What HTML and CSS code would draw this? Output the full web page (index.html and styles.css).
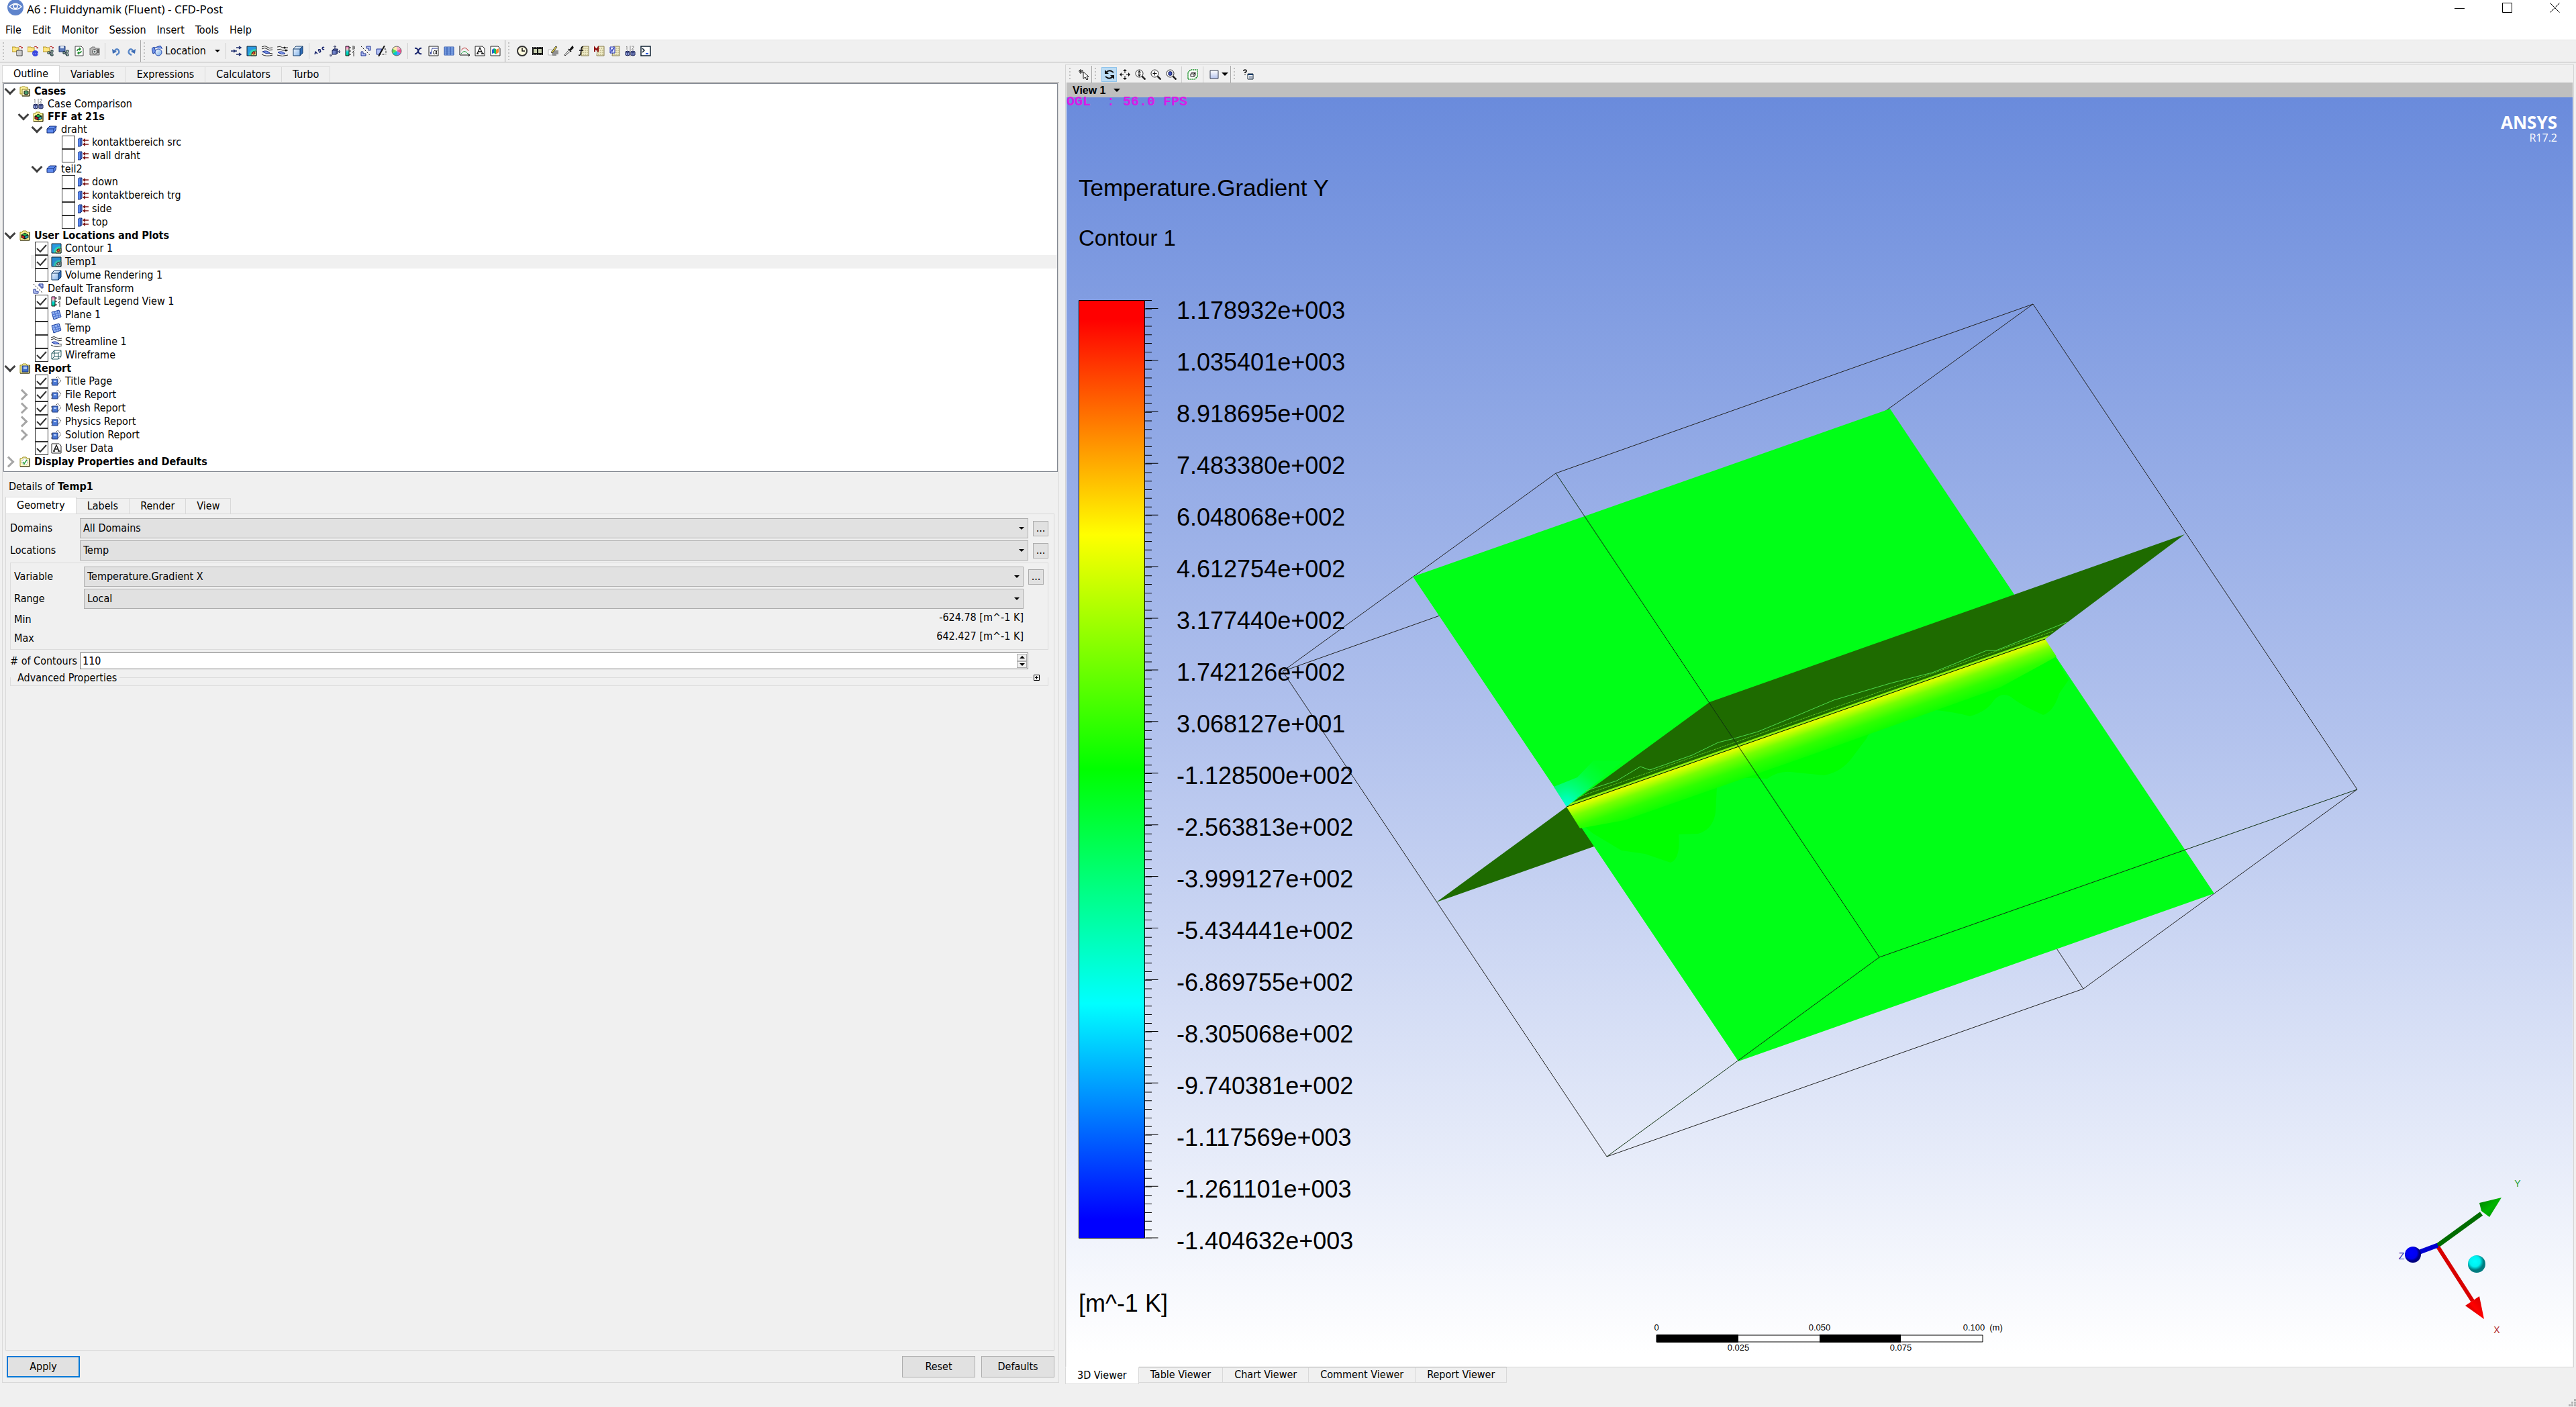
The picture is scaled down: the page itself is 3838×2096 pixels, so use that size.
FILE: index.html
```html
<!DOCTYPE html>
<html lang="en">
<head>
<meta charset="utf-8">
<title>A6 : Fluiddynamik (Fluent) - CFD-Post</title>
<link rel="stylesheet" href="styles.css">
</head>
<body>
<svg class="defs" aria-hidden="true">
  <defs>
    <linearGradient id="glass" x1="0" y1="0" x2="1" y2="1"><stop offset="0" stop-color="#fff"/><stop offset="1" stop-color="#6fa8e8"/></linearGradient>
    <linearGradient id="pale" x1="0" y1="0" x2="0" y2="1"><stop offset="0" stop-color="#fff"/><stop offset="1" stop-color="#b4c2ec"/></linearGradient>
    <linearGradient id="rainbow" x1="0" y1="0" x2="0" y2="1"><stop offset="0" stop-color="#f6c"/><stop offset=".3" stop-color="#fcc"/><stop offset=".6" stop-color="#0dd"/><stop offset="1" stop-color="#0c8"/></linearGradient>
  </defs>
  <symbol id="i-open" viewBox="0 0 16 16"><path d="M0 9V2h5l1 1h4v6z" fill="#ffe680" stroke="#b09020"/><path d="M10 2q4-2 5 2M13 3l2 1 1-2" fill="none" stroke="#b01818"/><path d="M7 7h8v8H7z" fill="#fff" stroke="#222"/><path d="M9 9h5M9 11h5M9 13h5" stroke="#999"/></symbol>
  <symbol id="i-openres" viewBox="0 0 16 16"><path d="M0 9V2h5l1 1h4v6z" fill="#ffe680" stroke="#b09020"/><path d="M10 2q4-2 5 2M13 3l2 1 1-2" fill="none" stroke="#b01818"/><circle cx="11.500" cy="11.500" r="4.500" fill="#3a48e0"/><path d="M9 12h6" stroke="#fff" stroke-dasharray="1 1.500"/></symbol>
  <symbol id="i-openst" viewBox="0 0 16 16"><path d="M0 9V2h5l1 1h4v6z" fill="#ffe680" stroke="#b09020"/><path d="M10 2q4-2 5 2M13 3l2 1 1-2" fill="none" stroke="#b01818"/><path d="M7 9h3v3H7zM12 7h3v3h-3zM12 12h3v3h-3zM10 10h2M11 10v4h1" fill="#bde0bd" stroke="#123"/></symbol>
  <symbol id="i-save" viewBox="0 0 16 16"><path d="M1 1h9v8H1z" fill="#5a78b8" stroke="#203a70"/><path d="M3 1h5v3H3z" fill="#dfe8f8"/><path d="M7 9h3v3H7zM12 7h3v3h-3zM12 12h3v3h-3zM10 10h2M11 10v4h1" fill="#bde0bd" stroke="#123"/></symbol>
  <symbol id="i-refresh" viewBox="0 0 16 16"><path d="M2 1h9l3 3v11H2z" fill="#fff" stroke="#444"/><path d="M5 8q0-3 4-3M8 3l2 2-2 2M11 8q0 3-4 3M8 9l-2 2 2 2" fill="none" stroke="#1c8a2c" stroke-width="1.500"/></symbol>
  <symbol id="i-camera" viewBox="0 0 16 16"><path d="M1 4h2l1-2h4l1 2h6v10H1z" fill="#b8b8b8" stroke="#777"/><circle cx="8" cy="9" r="3.500" fill="#eee" stroke="#444"/><circle cx="8" cy="9" r="1.500" fill="#566"/><path d="M12 5h3v6h-3z" fill="#666"/></symbol>
  <symbol id="i-undo" viewBox="0 0 16 16"><path d="M8 14q7-3 3-8-3-2-5 2" fill="none" stroke="#5a88c8" stroke-width="2.500"/><path d="M2 5l1 7 6-3z" fill="#3d6cb4"/></symbol>
  <symbol id="i-redo" viewBox="0 0 16 16"><path d="M8 14q-7-3-3-8 3-2 5 2" fill="none" stroke="#5a88c8" stroke-width="2.500"/><path d="M14 5l-1 7-6-3z" fill="#3d6cb4"/></symbol>
  <symbol id="i-plane" viewBox="0 0 16 16"><path d="M1 4l11-3 3 10-11 4z" fill="#8fb0f0" stroke="#1c3f9c"/><path d="M2 8l11-3M3 11l11-3M5 3l3 10M9 2l3 10" stroke="#4a70d0"/></symbol>
  <symbol id="i-location" viewBox="0 0 16 16"><path d="M0 4l4-2 2 8-4 2zM5 3l8-3 3 5" fill="#6f92e8" stroke="#1c3f9c"/><circle cx="10" cy="10" r="5" fill="url(#glass)" stroke="#2448b0"/></symbol>
  <symbol id="i-vector" viewBox="0 0 16 16"><path d="M8 3h6M12 1l3 2-3 2M0 8h6M4 6l3 2-3 2M8 8h1M8 13h6M12 11l3 2-3 2" fill="none" stroke="#1c2c6c" stroke-width="1.500"/></symbol>
  <symbol id="i-contour" viewBox="0 0 16 16"><path d="M1 1h14v14H1z" fill="#2a9ae0"/><path d="M4 15q0-10 11-10v10z" fill="#30d8b0"/><path d="M7 15q0-7 8-7v7z" fill="#f4e880" stroke="#464"/><circle cx="11" cy="11" r="2" fill="#f05030" stroke="#411"/><path d="M1 1h14v14H1z" fill="none" stroke="#123"/></symbol>
  <symbol id="i-contourgrey" viewBox="0 0 16 16"><path d="M1 1h14v14H1z" fill="#2a8ad0"/><path d="M4 15q0-10 11-10v10z" fill="#30c0b0"/><path d="M7 15q0-7 8-7v7z" fill="#b0c8c8" stroke="#465"/><circle cx="11" cy="11" r="2" fill="#a8a8a8" stroke="#333"/><path d="M1 1h14v14H1z" fill="none" stroke="#123"/></symbol>
  <symbol id="i-stream" viewBox="0 0 16 16"><path d="M0 2q5-3 8 0t8 1M0 5q5-3 8 0t8 1M0 13q7 4 16 1M10 11l6 1" fill="none" stroke="#222"/><path d="M1 9q6-3 11 2-6 2-11-2z" fill="#7f9cf0" stroke="#1c3090"/></symbol>
  <symbol id="i-particle" viewBox="0 0 16 16"><path d="M0 2q5-2 8 1h8M0 6q5-2 8 1h8M0 14q7 3 16 0" fill="none" stroke="#222"/><circle cx="11" cy="3" r="1.500"/><circle cx="13" cy="7" r="1.500"/><path d="M1 10q6-3 11 2-6 2-11-2z" fill="#7f9cf0" stroke="#1c3090"/></symbol>
  <symbol id="i-volume" viewBox="0 0 16 16"><path d="M1 5l4-4h10v10l-4 4H1z" fill="url(#glass)"/><path d="M11 5l4-4v10l-4 4z" fill="#2f6cb8"/><path d="M1 5l4-4h10v10l-4 4H1zM1 5h10v10M11 5l4-4" fill="none" stroke="#123a68"/></symbol>
  <symbol id="i-text" viewBox="0 0 16 16"><g fill="none" stroke="#18246c" stroke-width="1.400"><path d="M1 13l1-4 3 3M2 11l2-1M6 6l2 4q3-1 1-3 1-2-3-1M15 3q-2-2-3 1 1 3 3 1"/></g></symbol>
  <symbol id="i-coord" viewBox="0 0 16 16"><path d="M4 7l2-2h6v6l-2 2H4z" fill="#6f82c8" stroke="#141c50"/><path d="M4 7h6v6M10 7l2-2M8 5V0M6 2l2-2 2 2M12 9h4M14 7l2 2-2 2M4 13l-3 3M1 13v3h3" fill="none" stroke="#141c50"/></symbol>
  <symbol id="i-legend" viewBox="0 0 16 16"><path d="M1 1h5v14H1z" fill="url(#rainbow)" stroke="#111"/><path d="M6 3h3M6 8h3M6 13h3" stroke="#111"/><path d="M11 1h3v4h-3M11 3h3M14 7l-3 3h3M13 11v5" fill="none" stroke="#333"/></symbol>
  <symbol id="i-transform" viewBox="0 0 16 16"><path d="M9 1h6v6h-3V4H9zM1 9h3v3h4v3H1z" fill="#b4c2f4" stroke="#1c3090"/><path d="M1 1l14 14" stroke="#111" stroke-dasharray="2 2"/></symbol>
  <symbol id="i-clip" viewBox="0 0 16 16"><path d="M1 5h8l-4 8H1z" fill="#b4c2f4" stroke="#1c3090"/><path d="M13 0L4 16" stroke="#111" stroke-width="2"/><path d="M10 5h5v8H7" fill="none" stroke="#111" stroke-dasharray="1 1"/></symbol>
  <symbol id="i-color" viewBox="0 0 16 16"><path d="M8 8V1a7 7 0 016 3.500z" fill="#f4b0c8"/><path d="M8 8l6-3.500a7 7 0 010 7z" fill="#f05090"/><path d="M8 8l6 3.500A7 7 0 018 15z" fill="#68f"/><path d="M8 8v7a7 7 0 01-6-3.500z" fill="#0cc"/><path d="M8 8l-6 3.500a7 7 0 010-7z" fill="#5d5"/><path d="M8 8L2 4.500A7 7 0 018 1z" fill="#fea"/><circle cx="8" cy="8" r="7" fill="none" stroke="#666"/></symbol>
  <symbol id="i-var" viewBox="0 0 16 16"><path d="M3 4q4-1 5 4t5 4M13 4q-3-1-5 4t-5 4" fill="none" stroke="#18246c" stroke-width="2"/></symbol>
  <symbol id="i-expr" viewBox="0 0 16 16"><path d="M1 1h14v14H1z" fill="#fff" stroke="#222"/><path d="M3 9l1 4 2-9h8" fill="none" stroke="#1c3090"/><path d="M13 7q-2 7-5 5-1-4 2-5 2 1 3 6" fill="none" stroke="#111"/></symbol>
  <symbol id="i-table" viewBox="0 0 16 16"><path d="M1 2h14v12H1z" fill="#9cc0f8" stroke="#2850a8"/><path d="M1 5h14M1 8h14M1 11h14M5 2v12M10 2v12" stroke="#2850a8"/></symbol>
  <symbol id="i-chart" viewBox="0 0 16 16"><path d="M1 0v14h15M13 12l3 2-3 2" fill="none" stroke="#111"/><path d="M3 7q6-8 11 1" fill="none" stroke="#c03030"/><path d="M3 12q5-7 10 0" fill="none" stroke="#20a040"/></symbol>
  <symbol id="i-comment" viewBox="0 0 16 16"><path d="M1 1h11l3 3v11H1z" fill="#fff" stroke="#222"/><path d="M4 12l4-9 4 9M5 9h6M3 12h3M10 12h4" fill="none" stroke="#111" stroke-width="1.300"/></symbol>
  <symbol id="i-figure" viewBox="0 0 16 16"><path d="M1 1h11l3 3v11H1z" fill="#fff" stroke="#222"/><path d="M3 6l3-2v7l-3 1z" fill="#26c"/><path d="M6 4l3 1v8l-3-2z" fill="#1b6"/><path d="M9 6l4-2v6l-4 3z" fill="#e83"/></symbol>
  <symbol id="i-clock" viewBox="0 0 16 16"><circle cx="8" cy="8" r="7" fill="#fffbe0" stroke="#333" stroke-width="2"/><path d="M8 3v5h4" fill="none" stroke="#111" stroke-width="1.500"/></symbol>
  <symbol id="i-film" viewBox="0 0 16 16"><path d="M0 2h16v12H0z" fill="#111"/><path d="M2 5h5v6H2zM9 5h5v6H9z" fill="#c8d0b0"/><path d="M1 3h14M1 13h14" stroke="#fff" stroke-dasharray="1 1.500"/></symbol>
  <symbol id="i-edit" viewBox="0 0 16 16"><path d="M1 6h6v8H1z" fill="#fff" stroke="#bbb"/><path d="M8 8h8M7 10h9M7 12h9M7 14h6" stroke="#333"/><path d="M5 10l7-9 2 1-7 9z" fill="#f0d840" stroke="#444"/></symbol>
  <symbol id="i-probe" viewBox="0 0 16 16"><path d="M2 14l7-8 2 2-8 7z" fill="#fff" stroke="#333"/><path d="M8 5l4 4M10 6l4-5 1 2-4 4z" fill="#111" stroke="#111" stroke-width="1.500"/></symbol>
  <symbol id="calc" viewBox="0 0 16 16"><path d="M6 1h9v14H4z" fill="#f0ecc8" stroke="#857a4a"/><path d="M7 4h7M6 7h8M6 10h8M6 13h8" stroke="#a8a070" stroke-dasharray="2 1"/></symbol>
  <symbol id="i-fcalc" viewBox="0 0 16 16"><use href="#calc"/><path d="M7 2q-3-1-3 4l-1 7q-1 2-3 1M1 7h6" fill="none" stroke="#111" stroke-width="1.500"/></symbol>
  <symbol id="i-mcalc" viewBox="0 0 16 16"><use href="#calc"/><path d="M1 9V3l2.500 3L6 3v6" fill="none" stroke="#901010" stroke-width="2"/></symbol>
  <symbol id="i-vcalc" viewBox="0 0 16 16"><use href="#calc"/><path d="M1 2h7v9H1z" fill="#dfe4ff" stroke="#2030b0"/><path d="M1 4l3 4 3-4M4 8v2M1 10l6-7" fill="none" stroke="#2030b0"/></symbol>
  <symbol id="i-compare" viewBox="0 0 16 16"><path d="M2 2l1-1v5M10 1h3v2l-3 3h3" fill="none" stroke="#888"/><path d="M8 0v16" stroke="#888"/><path d="M1 9l3-1 3 1v5l-3 1-3-1zM9 9l3-1 3 1v5l-3 1-3-1z" fill="#8f9fdc" stroke="#141c50"/><path d="M2 10h4M4 10v4M10 10h4M12 10v4" stroke="#141c50"/></symbol>
  <symbol id="i-console" viewBox="0 0 16 16"><path d="M1 1h14v14H1z" fill="#fff" stroke="#123" stroke-width="1.500"/><path d="M3 4l3 3-3 3" fill="none" stroke="#123" stroke-width="1.500"/><path d="M8 12h4" stroke="#25d" stroke-width="2"/></symbol>
  <symbol id="i-cases" viewBox="0 0 16 16"><path d="M1 12V2h2l1-1h4l1 1h3v10z" fill="#fff3a0" stroke="#a09018"/><path d="M4 15V5h11v10z" fill="#fff9c0" stroke="#8a8020"/><path d="M15 5v10H4" fill="none" stroke="#222"/><path d="M7 8l3-1 3 1v4l-3 1-3-1z" fill="#4a9a6a" stroke="#111"/></symbol>
  <symbol id="i-case" viewBox="0 0 16 16"><path d="M1 15V3h3l1-2h5l1 2h4v12z" fill="#fff59a" stroke="#9a8c18"/><path d="M15 3v12H1" fill="none" stroke="#222"/><path d="M3 7l5-3 5 3-5 2z" fill="#2cb84a" stroke="#111"/><path d="M3 7l5 2v4l-5-2z" fill="#c82020" stroke="#111"/><path d="M13 7L8 9v4l5-2z" fill="#28b0b8" stroke="#111"/></symbol>
  <symbol id="i-report" viewBox="0 0 16 16"><path d="M1 15V3h3l1-2h5l1 2h4v12z" fill="#fff59a" stroke="#9a8c18"/><path d="M15 3v12H1" fill="none" stroke="#222"/><path d="M4 4h9v9H4z" fill="#3f6fc8" stroke="#1c3880"/><path d="M6 5h5v4H6z" fill="#a8c4f4"/></symbol>
  <symbol id="i-display" viewBox="0 0 16 16"><path d="M1 15V3h3l1-2h5l1 2h4v12z" fill="#fffbc8" stroke="#9a8c18"/><path d="M15 3v12H1" fill="none" stroke="#222"/><circle cx="8" cy="8" r="4.500" fill="#fff" stroke="#899" stroke-dasharray="2 1"/><path d="M5 8l2 3 4-6" fill="none" stroke="#28a038" stroke-width="1.500"/></symbol>
  <symbol id="i-domain" viewBox="0 0 16 16"><path d="M1 7l4-4h10l-1 6-3 4H1z" fill="#5f8cf0" stroke="#122c78"/><path d="M1 7h10v6M11 7l4-4" fill="none" stroke="#122c78"/></symbol>
  <symbol id="i-boundary" viewBox="0 0 16 16"><path d="M0 4l2-2h4v10l-2 2H0z" fill="#5f8cf0" stroke="#122c78"/><path d="M4 4v10M4 4l2-2" stroke="#122c78"/><path d="M9 5h7M9 11h7" stroke="#7c1414" stroke-width="1.500"/><path d="M7 5l4-3v6zM7 11l4-3v6z" fill="#7c1414"/></symbol>
  <symbol id="i-wire" viewBox="0 0 16 16"><path d="M1 5l4-4h10v9l-4 4H1zM1 5h10v9M11 5l4-4M5 1v9h10M5 10l-4 4" fill="none" stroke="#245a60"/></symbol>
  <symbol id="i-page" viewBox="0 0 16 16"><path d="M8 3l2-2 5 6-5 6-2-2" fill="#fff" stroke="#444" stroke-dasharray="2 1"/><path d="M2 5h8v9H2z" fill="#4a78d4" stroke="#1c3880"/><path d="M4 7h4v2H4z" fill="#bcd0f8"/><path d="M1 5v9" stroke="#333" stroke-dasharray="1 1"/></symbol>
  <symbol id="i-pick" viewBox="0 0 16 16"><path d="M3 0v7M0 3h7M1 1l5 5M6 1L1 6" stroke="#111"/><path d="M7 4v10l3-2 2 4 2-1-2-4h3z" fill="#fff" stroke="#111"/></symbol>
  <symbol id="i-rotate" viewBox="0 0 16 16"><path d="M3 5q4-4 8-2l3 2M13 11q-4 4-8 2l-3-2" fill="none" stroke="#111" stroke-width="2"/><path d="M1 1v6h6zM15 15V9H9z" fill="#111"/></symbol>
  <symbol id="i-pan" viewBox="0 0 16 16"><path d="M8 0l3 3H5zM8 16l3-3H5zM0 8l3-3v6zM16 8l-3-3v6z" fill="#111"/><path d="M8 2v4M8 10v4M2 8h4M10 8h4" stroke="#111"/></symbol>
  <symbol id="mag" viewBox="0 0 16 16"><circle cx="6.500" cy="6.500" r="5.500" fill="#fff" stroke="#222"/><path d="M10.500 10.500l5 5" stroke="#222" stroke-width="2.500"/></symbol>
  <symbol id="i-zoom" viewBox="0 0 16 16"><use href="#mag"/><path d="M6.500 2l2 3h-4zM6.500 11l2-3h-4zM5 6.500h3" fill="#111" stroke="#111" stroke-width=".5"/></symbol>
  <symbol id="i-zoombox" viewBox="0 0 16 16"><use href="#mag"/><path d="M6.500 3.500v6M3.500 6.500h6" stroke="#111"/></symbol>
  <symbol id="i-fit" viewBox="0 0 16 16"><use href="#mag"/><path d="M4 4.500l2.500-1 2.500 1v4l-2.500 1-2.500-1z" fill="#3c50b8" stroke="#141c50"/></symbol>
  <symbol id="i-hilite" viewBox="0 0 16 16"><path d="M1 5l4-4h10v10l-4 4H1z" fill="#fff" stroke="#0a8a1a" stroke-width="1.500" stroke-dasharray="2 1"/><path d="M5 7l2-2h5v4l-2 2H5zM5 7h5v4M10 7l2-2" fill="none" stroke="#111"/></symbol>
  <symbol id="i-layout" viewBox="0 0 16 16"><path d="M2 2h12v12H2z" fill="url(#pale)" stroke="#333a50"/></symbol>
  <symbol id="i-helpwin" viewBox="0 0 16 16"><path d="M1 3q0-2 2-2t2 2q0 1-2 2v1M3 8v1" fill="none" stroke="#111" stroke-width="1.700"/><path d="M7 7h8v8H7z" fill="#fff" stroke="#123"/><path d="M7 7h8v2H7z" fill="#123a68"/><path d="M9 11h5M9 13h5" stroke="#568"/></symbol>
</svg>

<header>
  <div class="titlebar">
    <svg class="appicon" viewBox="0 0 24 24"><circle cx="12" cy="12" r="12" fill="#5f84cc"/><path d="M3 11q9-9 18 0-9 8-18 0z" fill="none" stroke="#fff" stroke-width="1.500"/><circle cx="12" cy="10.500" r="3" fill="none" stroke="#fff" stroke-width="1.500"/></svg>
    <h1>A6 : Fluiddynamik (Fluent) - CFD-Post</h1>
    <div class="winbuttons">
      <button aria-label="Minimize"><svg viewBox="0 0 16 16"><path d="M0 8.500h15" stroke="#000"/></svg></button>
      <button aria-label="Maximize"><svg viewBox="0 0 16 16"><path d="M.5 .5h14v14H.5z" fill="none" stroke="#000"/></svg></button>
      <button aria-label="Close"><svg viewBox="0 0 16 16"><path d="M.5 .5l14 14M14.500 .5l-14 14" stroke="#000"/></svg></button>
    </div>
  </div>
  <nav class="menubar">
    <button>File</button><button>Edit</button><button>Monitor</button><button>Session</button><button>Insert</button><button>Tools</button><button>Help</button>
  </nav>
  <div class="toolbar">
    <div class="group">
      <span class="grip"></span>
      <button aria-label="Load results"><svg><use href="#i-open"/></svg></button><button aria-label="Load recent"><svg><use href="#i-openres"/></svg></button><button aria-label="Load state"><svg><use href="#i-openst"/></svg></button><button aria-label="Save state"><svg><use href="#i-save"/></svg></button><button aria-label="Refresh"><svg><use href="#i-refresh"/></svg></button><button aria-label="Save picture"><svg><use href="#i-camera"/></svg></button>
      <span class="sep"></span>
      <button aria-label="Undo"><svg><use href="#i-undo"/></svg></button><button aria-label="Redo"><svg><use href="#i-redo"/></svg></button>
    </div>
    <div class="group">
      <span class="grip"></span>
      <button class="location"><svg><use href="#i-location"/></svg>Location<i class="tri"></i></button>
      <span class="sep"></span>
      <button aria-label="Vector"><svg><use href="#i-vector"/></svg></button><button aria-label="Contour"><svg><use href="#i-contour"/></svg></button><button aria-label="Streamline"><svg><use href="#i-stream"/></svg></button><button aria-label="Particle track"><svg><use href="#i-particle"/></svg></button><button aria-label="Volume rendering"><svg><use href="#i-volume"/></svg></button>
      <span class="sep"></span>
      <button aria-label="Text"><svg><use href="#i-text"/></svg></button><button aria-label="Coordinate frame"><svg><use href="#i-coord"/></svg></button><button aria-label="Legend"><svg><use href="#i-legend"/></svg></button><button aria-label="Instance transform"><svg><use href="#i-transform"/></svg></button><button aria-label="Clip plane"><svg><use href="#i-clip"/></svg></button><button aria-label="Color map"><svg><use href="#i-color"/></svg></button>
      <span class="sep"></span>
      <button aria-label="Variable"><svg><use href="#i-var"/></svg></button><button aria-label="Expression"><svg><use href="#i-expr"/></svg></button><button aria-label="Table"><svg><use href="#i-table"/></svg></button><button aria-label="Chart"><svg><use href="#i-chart"/></svg></button><button aria-label="Comment"><svg><use href="#i-comment"/></svg></button><button aria-label="Figure"><svg><use href="#i-figure"/></svg></button>
    </div>
    <div class="group">
      <span class="grip"></span>
      <button aria-label="Timesteps"><svg><use href="#i-clock"/></svg></button><button aria-label="Animation"><svg><use href="#i-film"/></svg></button><button aria-label="Quick editor"><svg><use href="#i-edit"/></svg></button><button aria-label="Probe"><svg><use href="#i-probe"/></svg></button><button aria-label="Function calculator"><svg><use href="#i-fcalc"/></svg></button><button aria-label="Macro calculator"><svg><use href="#i-mcalc"/></svg></button><button aria-label="Mesh calculator"><svg><use href="#i-vcalc"/></svg></button><button aria-label="Case comparison"><svg><use href="#i-compare"/></svg></button><button aria-label="Command editor"><svg><use href="#i-console"/></svg></button>
    </div>
  </div>
</header>

<main>
  <section class="side">
    <div class="tabs">
      <button class="tab active">Outline</button><button class="tab">Variables</button><button class="tab">Expressions</button><button class="tab">Calculators</button><button class="tab">Turbo</button>
    </div>
    <div class="sidebody">
      <div class="tree">
        <div class="row head"><span class="slot open"></span><div class="item"><svg><use href="#i-cases"/></svg>Cases</div></div>
        <div class="row l1"><span class="slot"></span><div class="item"><svg><use href="#i-compare"/></svg>Case Comparison</div></div>
        <div class="row head l1"><span class="slot open"></span><div class="item"><svg><use href="#i-case"/></svg>FFF at 21s</div></div>
        <div class="row l2"><span class="slot open"></span><div class="item"><svg><use href="#i-domain"/></svg>draht</div></div>
        <div class="row check l3"><span class="slot"></span><label class="item"><input type="checkbox"><svg><use href="#i-boundary"/></svg>kontaktbereich src</label></div>
        <div class="row check l3"><span class="slot"></span><label class="item"><input type="checkbox"><svg><use href="#i-boundary"/></svg>wall draht</label></div>
        <div class="row l2"><span class="slot open"></span><div class="item"><svg><use href="#i-domain"/></svg>teil2</div></div>
        <div class="row check l3"><span class="slot"></span><label class="item"><input type="checkbox"><svg><use href="#i-boundary"/></svg>down</label></div>
        <div class="row check l3"><span class="slot"></span><label class="item"><input type="checkbox"><svg><use href="#i-boundary"/></svg>kontaktbereich trg</label></div>
        <div class="row check l3"><span class="slot"></span><label class="item"><input type="checkbox"><svg><use href="#i-boundary"/></svg>side</label></div>
        <div class="row check l3"><span class="slot"></span><label class="item"><input type="checkbox"><svg><use href="#i-boundary"/></svg>top</label></div>
        <div class="row head"><span class="slot open"></span><div class="item"><svg><use href="#i-case"/></svg>User Locations and Plots</div></div>
        <div class="row check l1"><span class="slot"></span><label class="item"><input type="checkbox" checked><svg><use href="#i-contour"/></svg>Contour 1</label></div>
        <div class="row check l1 selected"><span class="slot"></span><label class="item"><input type="checkbox" checked><svg><use href="#i-contourgrey"/></svg>Temp1</label></div>
        <div class="row check l1"><span class="slot"></span><label class="item"><input type="checkbox"><svg><use href="#i-volume"/></svg>Volume Rendering 1</label></div>
        <div class="row l1"><span class="slot"></span><div class="item"><svg><use href="#i-transform"/></svg>Default Transform</div></div>
        <div class="row check l1"><span class="slot"></span><label class="item"><input type="checkbox" checked><svg><use href="#i-legend"/></svg>Default Legend View 1</label></div>
        <div class="row check l1"><span class="slot"></span><label class="item"><input type="checkbox"><svg><use href="#i-plane"/></svg>Plane 1</label></div>
        <div class="row check l1"><span class="slot"></span><label class="item"><input type="checkbox"><svg><use href="#i-plane"/></svg>Temp</label></div>
        <div class="row check l1"><span class="slot"></span><label class="item"><input type="checkbox"><svg><use href="#i-stream"/></svg>Streamline 1</label></div>
        <div class="row check l1"><span class="slot"></span><label class="item"><input type="checkbox" checked><svg><use href="#i-wire"/></svg>Wireframe</label></div>
        <div class="row head"><span class="slot open"></span><div class="item"><svg><use href="#i-report"/></svg>Report</div></div>
        <div class="row check l1"><span class="slot"></span><label class="item"><input type="checkbox" checked><svg><use href="#i-page"/></svg>Title Page</label></div>
        <div class="row check l1"><span class="slot closed"></span><label class="item"><input type="checkbox" checked><svg><use href="#i-page"/></svg>File Report</label></div>
        <div class="row check l1"><span class="slot closed"></span><label class="item"><input type="checkbox" checked><svg><use href="#i-page"/></svg>Mesh Report</label></div>
        <div class="row check l1"><span class="slot closed"></span><label class="item"><input type="checkbox" checked><svg><use href="#i-page"/></svg>Physics Report</label></div>
        <div class="row check l1"><span class="slot closed"></span><label class="item"><input type="checkbox"><svg><use href="#i-page"/></svg>Solution Report</label></div>
        <div class="row check l1"><span class="slot"></span><label class="item"><input type="checkbox" checked><svg><use href="#i-comment"/></svg>User Data</label></div>
        <div class="row head"><span class="slot closed"></span><div class="item"><svg><use href="#i-display"/></svg>Display Properties and Defaults</div></div>
      </div>

      <div class="details">
        <p class="caption">Details of <b>Temp1</b></p>
        <div class="tabs small">
          <button class="tab active">Geometry</button><button class="tab">Labels</button><button class="tab">Render</button><button class="tab">View</button>
        </div>
        <div class="form">
          <div class="field"><label for="domains">Domains</label><span class="combo"><select id="domains"><option>All Domains</option></select></span><button class="more">...</button></div>
          <div class="field"><label for="locations">Locations</label><span class="combo"><select id="locations"><option>Temp</option></select></span><button class="more">...</button></div>
          <div class="box">
            <div class="field"><label for="variable">Variable</label><span class="combo"><select id="variable"><option>Temperature.Gradient X</option></select></span><button class="more">...</button></div>
            <div class="field"><label for="range">Range</label><span class="combo"><select id="range"><option>Local</option></select></span><span class="nomore"></span></div>
            <div class="value"><span>Min</span><output>-624.78 [m^-1 K]</output></div>
            <div class="value"><span>Max</span><output>642.427 [m^-1 K]</output></div>
          </div>
          <div class="field contours"><label for="contours"># of Contours</label><span class="spin"><input id="contours" type="text" value="110"><span class="arrows"><button aria-label="Increase"><i class="tri up"></i></button><button aria-label="Decrease"><i class="tri"></i></button></span></span><span class="nomore"></span></div>
          <div class="advanced"><span>Advanced Properties</span><i></i><button aria-label="Expand"><svg viewBox="0 0 9 9"><path d="M.5 .5h8v8h-8zM2 4.500h5M4.500 2v5" fill="none" stroke="#000"/></svg></button></div>
        </div>
        <div class="actions"><button class="default">Apply</button><span></span><button>Reset</button><button>Defaults</button></div>
      </div>
    </div>
  </section>

  <section class="viewer">
    <div class="frame">
      <div class="toolbar slim">
        <div class="group"><span class="grip"></span><button aria-label="Pick"><svg><use href="#i-pick"/></svg></button></div>
        <div class="group"><span class="grip"></span><button class="on" aria-label="Rotate"><svg><use href="#i-rotate"/></svg></button><button aria-label="Pan"><svg><use href="#i-pan"/></svg></button><button aria-label="Zoom"><svg><use href="#i-zoom"/></svg></button><button aria-label="Zoom box"><svg><use href="#i-zoombox"/></svg></button><button aria-label="Fit view"><svg><use href="#i-fit"/></svg></button><span class="sep"></span><button aria-label="Highlighting"><svg><use href="#i-hilite"/></svg></button><span class="sep"></span><button class="layout" aria-label="Viewport layout"><svg><use href="#i-layout"/></svg><i class="tri"></i></button></div>
        <div class="group"><span class="grip"></span><button aria-label="Viewer help"><svg><use href="#i-helpwin"/></svg></button></div>
      </div>
      <button class="viewbar">View 1<i class="tri"></i></button>
      <div class="canvas">
        <svg class="scene" viewBox="1589 145 2244 1890" preserveAspectRatio="xMinYMin meet">
          <defs>
            <linearGradient id="heat" gradientUnits="userSpaceOnUse" x1="2334" y1="1202" x2="2352" y2="1253"><stop offset="0" stop-color="#f4ff00"/><stop offset=".12" stop-color="#c4ff00"/><stop offset=".3" stop-color="#78ff00"/><stop offset=".6" stop-color="#30ff00"/><stop offset="1" stop-color="#0f0"/></linearGradient>
            <radialGradient id="cold" gradientUnits="userSpaceOnUse" cx="2334" cy="1200" r="76"><stop offset="0" stop-color="#00ffd8"/><stop offset=".35" stop-color="#00ff80"/><stop offset=".7" stop-color="#00ff3c"/><stop offset="1" stop-color="#00ff20"/></radialGradient>
            <radialGradient id="ballb" cx=".4" cy=".4"><stop offset="0" stop-color="#00f"/><stop offset=".7" stop-color="#0000f0"/><stop offset="1" stop-color="#000080"/></radialGradient>
            <radialGradient id="ballc" cx=".4" cy=".35"><stop offset="0" stop-color="#0ff"/><stop offset=".6" stop-color="#00f0f0"/><stop offset="1" stop-color="#007c80"/></radialGradient>
            <linearGradient id="headg" x1="0" y1="0" x2="1" y2="1"><stop offset="0" stop-color="#007a00"/><stop offset=".5" stop-color="#00b400"/><stop offset="1" stop-color="#009000"/></linearGradient>
            <linearGradient id="headr" x1="0" y1="1" x2="1" y2="0"><stop offset="0" stop-color="#800"/><stop offset=".5" stop-color="#f00"/><stop offset="1" stop-color="#c00"/></linearGradient>
          </defs>
          <g fill="none" stroke="#222" stroke-width="1">
            <path d="M1911 1000L2622 748L3104 1473M2622 748L3029 453"/>
            <path d="M2318 705L1911 1000L2394 1723L3104 1473L3512 1176L3029 453L2318 705"/>
          </g>
          <path d="M2140 1344L2334 1202L2400 1252L2372 1262z" fill="#1e6b00"/>
          <path d="M2816 609L2105 859L2590 1581L3299 1331z" fill="#00ff17"/>
          <path d="M2334 1202L2315 1172L2350 1158L2374 1133L2419 1133z" fill="url(#cold)"/>
          <path d="M2334 1202L2346 1220L2374 1242L2416 1267L2451 1272L2489 1285Q2504 1280 2501 1243L2530 1242Q2552 1236 2556 1210L2558 1172Q2560 1160 2584 1158L2633 1160Q2650 1148 2668 1150L2718 1155Q2744 1150 2760 1128L2781 1100Q2790 1078 2844 1072L2875 1057Q2910 1060 2935 1067Q2960 1060 2970 1044Q2982 1030 2996 1038Q3010 1050 3044 1065Q3060 1060 3068 1033L3082 1013L3047 952z" fill="#0f0"/>
          <path d="M2334 1202L3047 952L3064 978L2980 1024L2700 1124L2420 1222L2354 1234z" fill="url(#heat)"/>
          <path d="M2334 1202L2547 1046L3255 796L3047 952z" fill="#1e6b00"/>
          <path d="M2363 1178L2409 1163L2444 1142L2458 1147L2521 1125L2560 1106L2584 1100L2619 1090L2675 1067L2732 1043L2816 1018L2879 1002L2914 988L2960 969L2974 969L3079 927" fill="none" stroke="#4fdc4a"/>
          <path d="M2341 1196L3054 946L3047 952L2334 1202z" fill="#8fee10"/>
          <path d="M2350 1188L3060 940" fill="none" stroke="#5cc81e" stroke-dasharray="3 1"/>
          <path d="M2334 1202L3047 952" stroke="#001800" stroke-width="1"/>
          <path d="M2318 705L2800 1426L3512 1176M2800 1426L2394 1723" fill="none" stroke="#103010"/>

          <path d="M3631 1856L3697 1808" stroke="#006c00" stroke-width="7"/>
          <path d="M3727 1784L3694 1792L3697 1804L3709 1813z" fill="url(#headg)"/>
          <path d="M3632 1857L3684 1938" stroke="#d80000" stroke-width="6"/>
          <path d="M3701 1965L3673 1945L3694 1931z" fill="url(#headr)"/>
          <path d="M3632 1855L3600 1867" stroke="#0000d0" stroke-width="7"/>
          <circle cx="3595" cy="1869" r="12" fill="url(#ballb)"/>
          <circle cx="3690" cy="1883" r="13" fill="url(#ballc)"/>
          <g class="axis"><text x="3751" y="1768" fill="#20a030">Y</text><text x="3720" y="1986" fill="#b02020">X</text><text x="3578" y="1876" fill="#2020b0">Z</text></g>

          <path d="M2468 1989h486v10h-486z" fill="#fff" stroke="#000"/>
          <path d="M2468 1988h122v12h-122zM2711 1988h121v12h-121z"/>
          <g class="scale"><text x="2468" y="1982">0</text><text x="2711" y="1982">0.050</text><text x="2941" y="1982">0.100</text><text x="2974" y="1982">(m)</text><text x="2590" y="2012">0.025</text><text x="2832" y="2012">0.075</text></g>
        </svg>
        <div class="overlay">
          <pre class="fps">OGL  : 56.0 FPS</pre>
          <div class="brand"><b>ANSYS</b><span>R17.2</span></div>
        </div>
        <div class="legend">
          <p>Temperature.Gradient Y</p>
          <p class="name">Contour 1</p>
          <div class="scalebar">
            <svg viewBox="0 0 120 1398"><defs><linearGradient id="jet" x1="0" y1="0" x2="0" y2="1"><stop offset="0" stop-color="#f00"/><stop offset=".02" stop-color="#f00"/><stop offset=".25" stop-color="#ff0"/><stop offset=".5" stop-color="#0f0"/><stop offset=".75" stop-color="#0ff"/><stop offset=".98" stop-color="#00f"/><stop offset="1" stop-color="#00f"/></linearGradient></defs>
              <path d="M.5 .5h98v1397h-98z" fill="url(#jet)" stroke="#000"/>
              <path d="M104 0v1398" stroke="#000" stroke-width="10" stroke-dasharray="1 11.820"/>
              <path d="M109 12v1386" stroke="#000" stroke-width="19" stroke-dasharray="1 75.920"/></svg>
            <ol>
              <li>1.178932e+003</li><li>1.035401e+003</li><li>8.918695e+002</li><li>7.483380e+002</li><li>6.048068e+002</li><li>4.612754e+002</li><li>3.177440e+002</li><li>1.742126e+002</li><li>3.068127e+001</li><li>-1.128500e+002</li><li>-2.563813e+002</li><li>-3.999127e+002</li><li>-5.434441e+002</li><li>-6.869755e+002</li><li>-8.305068e+002</li><li>-9.740381e+002</li><li>-1.117569e+003</li><li>-1.261101e+003</li><li>-1.404632e+003</li>
            </ol>
          </div>
          <p class="unit">[m^-1 K]</p>
        </div>
      </div>
    </div>
    <div class="tabs bottom">
      <button class="tab active">3D Viewer</button><button class="tab">Table Viewer</button><button class="tab">Chart Viewer</button><button class="tab">Comment Viewer</button><button class="tab">Report Viewer</button>
    </div>
  </section>
</main>
<footer><svg viewBox="0 0 12 12"><path d="M9 0h3v3H9zM5 4h3v3H5zM9 4h3v3H9zM1 8h3v3H1zM5 8h3v3H5zM9 8h3v3H9z" fill="#b4b4b4"/></svg></footer>
</body>
</html>
```
FILE: styles.css
```css
* { box-sizing: border-box; }
body {
  margin: 0;
  min-height: 100vh;
  display: flex;
  flex-direction: column;
  background: #f0f0f0;
  color: #000;
  font: 16px/20px "DejaVu Sans Condensed", "DejaVu Sans", sans-serif;
  font-stretch: condensed;
}
h1, p, ol, pre { margin: 0; padding: 0; }
button {
  font: inherit;
  color: inherit;
  background: none;
  border: 0;
  padding: 0;
  margin: 0;
}
.defs { position: absolute; width: 0; height: 0; }
header { background: #fff; }

/* title bar and menu */
.titlebar { display: flex; align-items: center; height: 28px; padding-left: 11px; }
.appicon { width: 24px; height: 24px; margin-bottom: 6px; }
h1 { flex: 1; margin-left: 5px; font: 17px/24px "Noto Sans", sans-serif; font-stretch: normal; }
.winbuttons { display: flex; gap: 56px; padding-right: 24px; margin-bottom: 4px; }
.winbuttons button { width: 15px; height: 16px; display: flex; }
.winbuttons svg { width: 16px; height: 16px; flex: none; }
.menubar { display: flex; height: 31px; align-items: center; padding-bottom: 1px; padding-top: 4px; }
.menubar button { padding: 0 8px; }

/* tool bars */
.toolbar {
  display: flex;
  height: 34px;
  background: #f0f0f0;
  border-top: 1px solid #e4e4e4;
  border-bottom: 1px solid #b4b4b4;
}
.group { display: flex; align-items: center; padding-right: 2px; border-right: 1px solid #a8a8a8; }
.group:last-child { border-right: 0; }
.grip { width: 2px; height: 26px; margin: 0 8px 0 4px; background: repeating-linear-gradient(#c0c0c0 0 2px, transparent 2px 5px); }
.toolbar button { width: 23px; height: 22px; display: flex; align-items: center; justify-content: center; }
.toolbar svg { width: 16px; height: 16px; flex: none; }
.sep { width: 1px; height: 24px; background: #d0d0d0; margin: 0 4px; }
.toolbar .location { width: auto; gap: 4px; padding: 0 4px 0 2px; }
.tri { display: block; width: 0; height: 0; border: 4px solid transparent; border-top-color: #000; border-bottom: 0; }
.tri.up { border: 4px solid transparent; border-bottom-color: #000; border-top: 0; }
.location .tri { margin-left: 9px; }
.toolbar.slim { height: 26px; border-top: 0; }
.slim .grip { height: 20px; }
.slim .group { padding-right: 0; }
.slim .on { background: #bcdcf4; border: 1px solid #90c4ec; }
.toolbar .layout { width: 36px; gap: 3px; }
.layout .tri, .viewbar .tri { border-width: 5px 5px 0; }

main {
  flex: 1;
  display: grid;
  grid-template-columns: 1575fr 2248fr;
  gap: 9px;
  padding: 3px 3px 0;
}

/* tabs */
.tabs { display: flex; align-items: flex-end; height: 26px; margin-bottom: -1px; }
.tab { height: 24px; padding: 0 16px; border: 1px solid #d9d9d9; border-left: 0; }
.tab.active { height: 26px; background: #fff; border-left: 1px solid #d9d9d9; border-bottom-color: #fff; }

/* left side */
.side { display: flex; flex-direction: column; padding-top: 1px; }
.sidebody { flex: 1; display: flex; flex-direction: column; border: 1px solid #d9d9d9; border-top-color: #a0a0a0; padding-top: 1px; margin-bottom: 1px; }
.tree { background: #fff; border: 1px solid #828790; padding: 1px 0 5px; margin: 0 1px; }
.row { display: flex; height: 19px; line-height: 19px; }
.row.check { height: 20px; line-height: 20px; }
.l1 { padding-left: 20px; }
.l2 { padding-left: 40px; }
.l3 { padding-left: 60px; }
.slot { width: 18px; margin-right: 2px; display: flex; align-items: center; justify-content: center; }
.slot::before { content: ""; width: 9px; height: 9px; border: solid transparent; border-width: 0 3px 3px 0; }
.open::before { border-color: #404040; transform: translateY(-3px) rotate(45deg); }
.closed::before { border-color: #a6a6a6; transform: translateX(-2px) rotate(-45deg); }
.item { flex: 1; display: flex; align-items: center; padding-left: 3px; white-space: nowrap; }
.check .item { padding-left: 6px; }
.item svg { width: 16px; height: 16px; margin-right: 6px; flex: none; }
.check .item svg { margin: 0 5px 0 4px; }
.head { font-weight: bold; }
.selected .item { background: #f0f0f0; }
input[type="checkbox"] {
  appearance: none;
  width: 20px;
  height: 20px;
  margin: 0;
  border: 1px solid #333;
  background: #fff;
  flex: none;
}
input[type="checkbox"]:checked {
  background: #fff url("data:image/svg+xml,%3Csvg xmlns='http://www.w3.org/2000/svg' viewBox='0 0 18 18'%3E%3Cpath d='M2 9l5 5 9-10' fill='none' stroke='%23333' stroke-width='2'/%3E%3C/svg%3E");
}

.details { flex: 1; display: flex; flex-direction: column; padding: 9px 6px 7px 4px; }
.caption { padding: 3px 0 4px 5px; height: 27px; }
.small { height: 27px; }
.form { flex: 1; border: 1px solid #d9d9d9; padding: 6px 8px 0 6px; }
.field { display: flex; align-items: center; height: 30px; margin-bottom: 3px; }
.field label { width: 104px; flex: none; white-space: nowrap; }
.combo { flex: 1; position: relative; height: 30px; }
.combo::after { content: ""; position: absolute; right: 6px; top: 13px; border: 4px solid transparent; border-top-color: #000; border-bottom: 0; }
select {
  appearance: none;
  width: 100%;
  height: 30px;
  padding: 0 4px;
  border: 1px solid #adadad;
  border-radius: 0;
  background: #e1e1e1;
  color: #000;
  font: inherit;
}
.more, .nomore { width: 23px; height: 23px; margin-left: 7px; flex: none; }
.more { background: #e1e1e1; border: 1px solid #adadad; line-height: 16px; }
.box { border: 1px solid #dcdcdc; padding: 5px 6px 1px 5px; }
.value { display: flex; align-items: flex-start; justify-content: space-between; height: 28px; padding-right: 30px; }
.value span { padding-top: 3px; }
.contours { height: 25px; margin: 4px 0 12px; }
.spin { flex: 1; display: flex; height: 25px; border: 1px solid #7a7a7a; background: #fff; padding: 1px; }
.spin input { flex: 1; border: 0; padding: 0 2px; background: none; font: inherit; min-width: 0; }
.arrows { width: 15px; display: flex; flex-direction: column; }
.arrows button { flex: 1; display: flex; align-items: center; justify-content: center; border: 1px solid #adadad; background: #f0f0f0; }
.advanced { display: flex; align-items: flex-start; height: 13px; border: 1px solid #dcdcdc; border-top: 0; }
.advanced span { padding: 0 4px 0 10px; margin-top: -9px; background: linear-gradient(90deg, transparent 7px, #f0f0f0 7px); }
.advanced i { flex: 1; border-top: 1px solid #dcdcdc; }
.advanced button { width: 9px; height: 9px; margin: -4px 12px 0 2px; display: flex; }
.advanced svg { width: 9px; height: 9px; }
.actions { display: flex; gap: 9px; padding: 8px 0 0 2px; }
.actions span { flex: 1; }
.actions button { width: 109px; height: 32px; background: #e1e1e1; border: 1px solid #adadad; }
.actions .default { border: 2px solid #0078d7; }

/* viewer */
.viewer { display: flex; flex-direction: column; }
.frame { flex: 1; display: flex; flex-direction: column; border: 1px solid #d4d4d4; border-top-color: #d9d9d9; padding: 1px 1px 0; }
.viewbar { display: flex; align-items: center; gap: 11px; height: 21px; padding-left: 9px; background: #bfbfbf; font: bold 16px/20px "Liberation Sans", sans-serif; }
.canvas { flex: 1; position: relative; background: linear-gradient(#6a8bdc, #b2c2ed 50%, #fff 99%); font-family: "Liberation Sans", sans-serif; font-stretch: normal; }
.scene { position: absolute; inset: 0; width: 100%; height: 100%; }
.scene text { text-anchor: middle; }
.axis { font-size: 14px; }
.scale { font-size: 13px; }
.overlay { position: relative; display: flex; justify-content: space-between; height: 115px; }
.fps { font: bold 20px/14px "Liberation Mono", monospace; color: #d81be8; }
.brand { display: flex; flex-direction: column; align-items: flex-end; padding: 22px 23px 0 0; color: #fff; font-family: "Open Sans", sans-serif; }
.brand b { font-size: 26px; line-height: 30px; font-weight: 700; }
.brand span { font-size: 16px; line-height: 16px; }
.legend { position: relative; padding-left: 18px; font-size: 36px; line-height: 40px; }
.legend p { margin-bottom: 35px; font-size: 35px; }
.legend .name { margin-bottom: 49px; font-size: 33px; }
.scalebar { display: flex; gap: 26px; }
.scalebar svg { width: 120px; height: 1398px; margin-top: 23px; }
.scalebar ol { list-style: none; line-height: 77px; }
.legend .unit { margin: 35px 0 0; font-size: 36px; }
.bottom { align-items: flex-start; height: 26px; margin-top: -1px; }
.bottom .tab { padding: 0 17px; border-top-color: #a0a0a0; }
.bottom .tab.active { border-color: #fff #d9d9d9 #d9d9d9; }

footer { height: 35px; display: flex; justify-content: flex-end; align-items: flex-end; }
footer svg { width: 12px; height: 12px; }
```
